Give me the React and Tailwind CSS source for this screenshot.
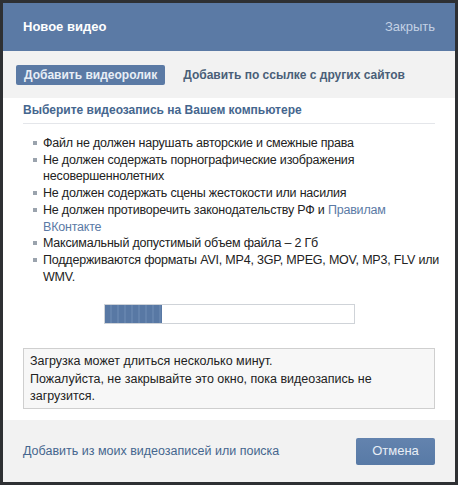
const rules = [
	{ text: 'Файл не должен нарушать авторские и смежные права' },
	{ text: 'Не должен содержать порнографические изображения несовершеннолетних' },
	{ text: 'Не должен содержать сцены жестокости или насилия' },
	{ text: 'Не должен противоречить законодательству РФ и ', link: 'Правилам ВКонтакте' },
	{ text: 'Максимальный допустимый объем файла – 2 Гб' },
	{ text: 'Поддерживаются форматы AVI, MP4, 3GP, MPEG, MOV, MP3, FLV или WMV.' },
]

const App = () => {
	return (
		<div
			className="h-[485px] w-[458px] bg-[#2e3033] p-[3px]"
			style={{ fontFamily: '"Liberation Sans", Arial, sans-serif' }}
		>
			<div className="flex h-[479px] w-[452px] flex-col bg-white">
				<header className="flex h-[48px] items-center justify-between bg-[#5b7aa5] pl-5 pr-5">
					<h1 className="text-[13px] font-bold text-white">Новое видео</h1>
					<span className="text-[13px] text-[#c3d1e4]">Закрыть</span>
				</header>

				<div className="flex h-[47px] items-center gap-[18px] bg-[#f2f2f2] pl-[13px]">
					<button className="h-[20px] rounded-[2px] bg-[#5b7aa5] px-2 text-[12px] font-bold text-[#e8eef6]">
						Добавить видеоролик
					</button>
					<span className="text-[12px] font-bold text-[#4a5f78]">Добавить по ссылке с других сайтов</span>
				</div>

				<div className="flex h-[322px] flex-col px-5">
					<p className="mt-[3px] border-b border-[#e4e6ea] pb-[5px] pt-[1px] text-[12px] font-bold leading-[16px] text-[#45668e]">
						Выберите видеозапись на Вашем компьютере
					</p>
					<ul className="mr-[-6px] mt-[11px] pl-[10px] text-[12.5px] leading-[16.7px] tracking-[-0.2px] text-[#222]">
						{rules.map((rule, idx) => (
							<li key={idx} className="relative pl-[10px]">
								<span className="absolute left-0 top-[6px] h-[4px] w-[4px] bg-[#9aa3ad]" />
								{rule.text}
								{rule.link && <span className="text-[#5b7aa5]">{rule.link}</span>}
							</li>
						))}
					</ul>
					<div className="mx-auto mt-[19px] flex h-[20px] w-[251px] border border-[#cfd3d8] bg-white">
						<div className="h-full w-[57px] bg-[repeating-linear-gradient(90deg,#5878a4_0px,#5878a4_5px,#6483ad_5px,#6483ad_7px)]" />
					</div>
					<div className="mt-[24px] h-[61px] border border-[#cfcfcf] bg-[#f7f7f7] px-[6px] pt-[4px] text-[12.5px] leading-[17.5px] text-[#222]">
						Загрузка может длиться несколько минут.
						<br />
						Пожалуйста, не закрывайте это окно, пока видеозапись не загрузится.
					</div>
				</div>

				<footer className="flex flex-1 items-center justify-between bg-[#f2f2f2] pl-5 pr-5">
					<span className="text-[12.5px] text-[#45668e]">Добавить из моих видеозаписей или поиска</span>
					<button className="h-[27px] w-[79px] rounded-[2px] bg-gradient-to-b from-[#6383ae] to-[#587aa6] text-[13px] text-[#e8eef6]">
						Отмена
					</button>
				</footer>
			</div>
		</div>
	)
}

export default App
